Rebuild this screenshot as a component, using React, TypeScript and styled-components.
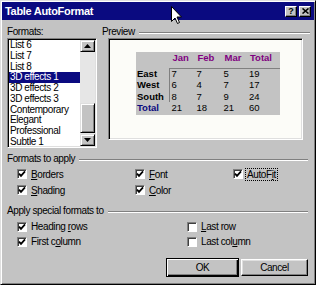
import React from 'react';
import styled, { createGlobalStyle } from 'styled-components';

const GlobalStyle = createGlobalStyle`
  html, body { margin: 0; padding: 0; background: #c3c3c3; }
  body { font-family: "Liberation Sans", Arial, sans-serif; }
`;

const Dialog = styled.div`
  position: relative;
  width: 316px;
  height: 285px;
  box-sizing: border-box;
  background: #c3c3c3;
  border: 1px solid;
  border-color: #dfdfdf #000 #000 #dfdfdf;
  box-shadow: inset 1px 1px #fff, inset -1px -1px #808080;
  padding: 1px;
  display: flex;
  flex-direction: column;
  font-size: 10px;
  letter-spacing: -0.4px;
  color: #000;
`;

const TitleBar = styled.div`
  height: 18px;
  flex: none;
  background: #0a0a80;
  display: flex;
  align-items: center;
  padding: 0 3px 0 3px;
`;

const Title = styled.div`
  flex: 1;
  color: #fff;
  font-weight: bold;
  font-size: 11px;
  letter-spacing: -0.3px;
`;

const CaptionButtons = styled.div`
  display: flex;
  gap: 2px;
`;

const CaptionButton = styled.div`
  width: 12px;
  height: 11px;
  box-sizing: border-box;
  background: #c3c3c3;
  border: 1px solid;
  border-color: #fff #000 #000 #fff;
  box-shadow: inset -1px -1px #808080;
  display: flex;
  align-items: center;
  justify-content: center;
  font-weight: bold;
  font-size: 9px;
  line-height: 9px;
  letter-spacing: 0;
`;

const Body = styled.div`
  flex: 1;
  display: flex;
  flex-direction: column;
  padding: 6px 4px 0 5px;
`;

const TopRow = styled.div`
  display: grid;
  grid-template-columns: 90px 1fr;
  column-gap: 5px;
`;

const Column = styled.div`
  display: flex;
  flex-direction: column;
`;

const Label = styled.div`
  height: 12px;
  line-height: 12px;
`;

const GroupLabel = styled.div<{ $right?: number }>`
  height: 12px;
  line-height: 12px;
  display: flex;
  align-items: center;
  margin-right: ${p => p.$right ?? 0}px;
  &::after {
    content: "";
    flex: 1;
    margin: 1px 0 0 4px;
    border-top: 1px solid #808080;
    border-bottom: 1px solid #fff;
  }
`;

const ListBox = styled.div`
  height: 110px;
  box-sizing: border-box;
  display: flex;
  background: #fff;
  border: 1px solid;
  border-color: #808080 #fff #fff #808080;
  box-shadow: inset 1px 1px #000, inset -1px -1px #dfdfdf;
  padding: 1px;
`;

const Items = styled.div`
  flex: 1;
  overflow: hidden;
  padding-top: 0.4px;
`;

const Item = styled.div<{ $selected?: boolean }>`
  height: 10.7px;
  line-height: 10.7px;
  padding-left: 1px;
  white-space: nowrap;
  background: ${p => (p.$selected ? '#0a0a80' : 'transparent')};
  color: ${p => (p.$selected ? '#fff' : '#000')};
`;

const ScrollBar = styled.div`
  width: 15px;
  display: flex;
  flex-direction: column;
  background: #e6e6e6;
`;

const Raised = styled.div`
  box-sizing: border-box;
  background: #c3c3c3;
  border: 1px solid;
  border-color: #dfdfdf #000 #000 #dfdfdf;
  box-shadow: inset 1px 1px #fff, inset -1px -1px #808080;
`;

const ScrollButton = styled(Raised)`
  height: 12px;
  flex: none;
  display: flex;
  align-items: center;
  justify-content: center;
`;

const Track = styled.div`
  flex: 1;
`;

const Thumb = styled(Raised)`
  margin-top: 51px;
  height: 30px;
`;

const PreviewFrame = styled.div`
  height: 102px;
  box-sizing: border-box;
  margin: 0 7px 0 6px;
  background: #fcfcf8;
  border: 1px solid;
  border-color: #808080 #fff #fff #808080;
  box-shadow: inset 1px 1px #000, inset -1px -1px #dfdfdf;
  padding: 13px 0 0 27px;
`;

const PreviewTable = styled.div`
  display: grid;
  width: 144px;
  grid-template-columns: 33px 25px 27px 25.5px 33.5px;
  grid-template-rows: 15.5px repeat(4, 11.6px);
  padding-bottom: 1px;
  background: #c3c3c3;
  font-size: 9.5px;
  letter-spacing: 0;
`;

const Cell = styled.div<{ $kind: 'head' | 'row' | 'total' | 'data' | 'blank'; $top?: boolean; $left?: boolean }>`
  line-height: ${p => (p.$kind === 'head' || p.$kind === 'blank' ? '12.6px' : '11.6px')};
  font-weight: ${p => (p.$kind === 'data' || p.$kind === 'blank' ? 'normal' : 'bold')};
  color: ${p => (p.$kind === 'head' ? '#800080' : p.$kind === 'total' ? '#0a0a80' : '#000')};
  padding-left: ${p => (p.$kind === 'head' ? 3.5 : p.$kind === 'data' ? 2.5 : 1)}px;
  box-shadow: ${p =>
    [p.$top ? 'inset 0 1px #808080' : '', p.$left ? 'inset 1px 0 #808080' : '']
      .filter(Boolean)
      .join(', ') || 'none'};
`;

const Section = styled.div<{ $gap: number }>`
  margin-top: ${p => p.$gap}px;
`;

const CheckGrid = styled.div<{ $cols: string; $row: number; $gap?: number }>`
  display: grid;
  grid-template-columns: ${p => p.$cols};
  grid-auto-rows: ${p => p.$row}px;
  padding-left: 10px;
  margin-top: ${p => p.$gap ?? 0}px;
`;

const CheckItem = styled.div`
  display: flex;
  align-items: center;
  gap: 4px;
`;

const Box = styled.div`
  width: 10px;
  height: 10px;
  box-sizing: border-box;
  background: #fff;
  border: 1px solid;
  border-color: #808080 #fff #fff #808080;
  box-shadow: inset 1px 1px #404040;
  display: flex;
  align-items: center;
  justify-content: center;
`;

const CheckLabel = styled.span<{ $focus?: boolean }>`
  line-height: 11px;
  padding: 0 1px;
  margin-left: -1px;
  outline: ${p => (p.$focus ? '1px dotted #000' : 'none')};
`;

const ButtonRow = styled.div`
  margin-top: 9px;
  display: flex;
  justify-content: flex-end;
  align-items: center;
  gap: 2px;
  padding-right: 2px;
`;

const Button = styled.button<{ $default?: boolean }>`
  font: inherit;
  letter-spacing: inherit;
  color: #000;
  background: #c3c3c3;
  box-sizing: border-box;
  padding: 0;
  width: ${p => (p.$default ? 73 : 67)}px;
  height: ${p => (p.$default ? 19 : 17)}px;
  border: 1px solid;
  border-color: ${p => (p.$default ? '#000' : '#fff #000 #000 #fff')};
  box-shadow: ${p =>
    p.$default
      ? 'inset 1px 1px #fff, inset -1px -1px #000, inset -2px -2px #808080'
      : 'inset -1px -1px #808080, inset 1px 1px #dfdfdf'};
`;

const Cursor = styled.svg`
  position: absolute;
  left: 170px;
  top: 5px;
`;

const Check = () => (
  <svg width="8" height="8" viewBox="0 0 8 8">
    <polyline points="1,3.6 3,5.8 7,1.4" fill="none" stroke="#000" strokeWidth="1.8" />
  </svg>
);

const Arrow = ({ up }: { up?: boolean }) => (
  <svg width="7" height="4" viewBox="0 0 7 4">
    <polygon points={up ? '3.5,0 7,4 0,4' : '0,0 7,0 3.5,4'} fill="#000" />
  </svg>
);

const formats = [
  'List 6', 'List 7', 'List 8', '3D effects 1', '3D effects 2', '3D effects 3',
  'Contemporary', 'Elegant', 'Professional', 'Subtle 1',
];

const rows: [string, number[], boolean][] = [
  ['East', [7, 7, 5, 19], false],
  ['West', [6, 4, 7, 17], false],
  ['South', [8, 7, 9, 24], false],
  ['Total', [21, 18, 21, 60], true],
];

function CheckBox({ checked, focus, children }: { checked: boolean; focus?: boolean; children: React.ReactNode }) {
  return (
    <CheckItem>
      <Box>{checked && <Check />}</Box>
      <CheckLabel $focus={focus}>{children}</CheckLabel>
    </CheckItem>
  );
}

export default function App() {
  return (
    <>
      <GlobalStyle />
      <Dialog>
        <TitleBar>
          <Title>Table AutoFormat</Title>
          <CaptionButtons>
            <CaptionButton>?</CaptionButton>
            <CaptionButton>
              <svg width="7" height="6" viewBox="0 0 7 6">
                <path d="M0.5 0.5 L6.5 5.5 M6.5 0.5 L0.5 5.5" stroke="#000" strokeWidth="1.6" />
              </svg>
            </CaptionButton>
          </CaptionButtons>
        </TitleBar>
        <Body>
          <TopRow>
            <Column>
              <Label>Formats:</Label>
              <ListBox>
                <Items>
                  {formats.map(f => (
                    <Item key={f} $selected={f === '3D effects 1'}>{f}</Item>
                  ))}
                </Items>
                <ScrollBar>
                  <ScrollButton><Arrow up /></ScrollButton>
                  <Track><Thumb /></Track>
                  <ScrollButton><Arrow /></ScrollButton>
                </ScrollBar>
              </ListBox>
            </Column>
            <Column>
              <GroupLabel>Preview</GroupLabel>
              <PreviewFrame>
                <PreviewTable>
                  <Cell $kind="blank" />
                  {['Jan', 'Feb', 'Mar', 'Total'].map(h => (
                    <Cell key={h} $kind="head">{h}</Cell>
                  ))}
                  {rows.map(([name, vals, total], r) => (
                    <React.Fragment key={name}>
                      <Cell $kind={total ? 'total' : 'row'}>{name}</Cell>
                      {vals.map((v, c) => (
                        <Cell key={c} $kind="data" $top={r === 0} $left={c === 0 && !total}>{v}</Cell>
                      ))}
                    </React.Fragment>
                  ))}
                </PreviewTable>
              </PreviewFrame>
            </Column>
          </TopRow>

          <Section $gap={5}>
            <GroupLabel $right={2}>Formats to apply</GroupLabel>
            <CheckGrid $cols="118px 98px auto" $row={16} $gap={1}>
              <CheckBox checked><u>B</u>orders</CheckBox>
              <CheckBox checked><u>F</u>ont</CheckBox>
              <CheckBox checked focus>AutoF<u>i</u>t</CheckBox>
              <CheckBox checked><u>S</u>hading</CheckBox>
              <CheckBox checked><u>C</u>olor</CheckBox>
            </CheckGrid>
          </Section>

          <Section $gap={7}>
            <GroupLabel $right={2}>Apply special formats to</GroupLabel>
            <CheckGrid $cols="170px auto" $row={15} $gap={2}>
              <CheckBox checked>Heading <u>r</u>ows</CheckBox>
              <CheckBox checked={false}><u>L</u>ast row</CheckBox>
              <CheckBox checked>First c<u>o</u>lumn</CheckBox>
              <CheckBox checked={false}>Last col<u>u</u>mn</CheckBox>
            </CheckGrid>
          </Section>

          <ButtonRow>
            <Button $default>OK</Button>
            <Button>Cancel</Button>
          </ButtonRow>
        </Body>
        <Cursor width="12" height="19" viewBox="0 0 12 19">
          <polygon
            points="0.5,0.5 0.5,15.5 4,12 6.5,17.5 8.5,16.5 6,11 10.5,11"
            fill="#fff"
            stroke="#000"
            strokeWidth="1"
            strokeLinejoin="miter"
          />
        </Cursor>
      </Dialog>
    </>
  );
}
